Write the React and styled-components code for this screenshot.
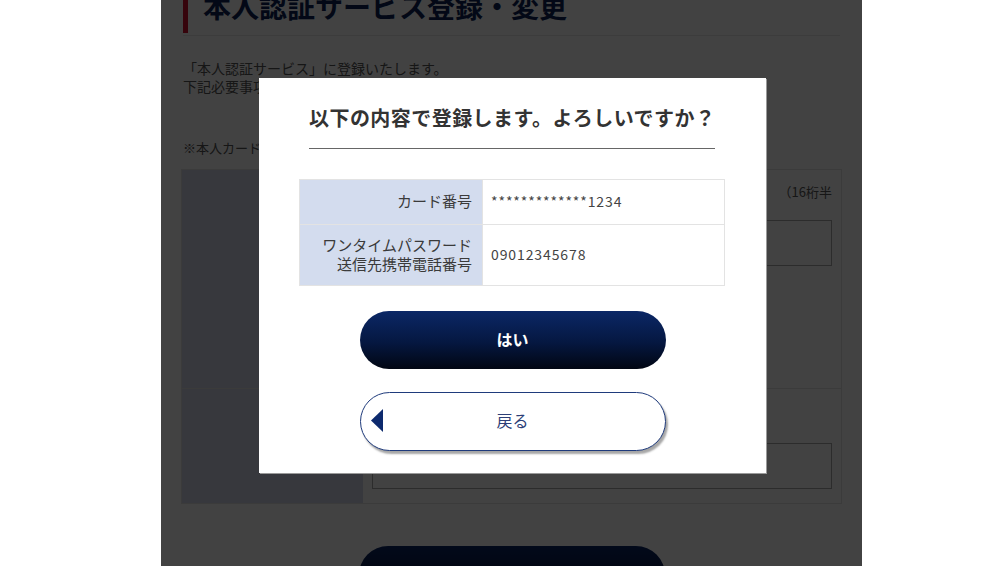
import styled, { createGlobalStyle } from 'styled-components';

const GlobalStyle = createGlobalStyle`
  html, body {
    margin: 0;
    padding: 0;
    background: #ffffff;
  }
  body {
    font-family: "Noto Sans CJK JP", "Noto Sans", sans-serif;
    color: #333;
  }
  #root {
    height: 566px;
    overflow: hidden;
  }
`

const Page = styled.div`
  position: relative;
  margin-left: 161px;
  width: 701px;
  height: 566px;
  overflow: hidden;
  background: #ffffff;
  box-sizing: border-box;
  padding: 0 20px;
`

const HeadingWrap = styled.div`
  margin: -11px 2px 0;
  padding-bottom: 2px;
  border-bottom: 1px solid #e8e8e8;
`

const Heading = styled.h1`
  margin: 0;
  padding: 0 0 10px 15px;
  border-left: 5px solid #d0102e;
  font-size: 28px;
  line-height: 34px;
  font-weight: 700;
  color: #0c1f56;
`

const Lead = styled.p`
  margin: 23px 2px 0;
  font-size: 14px;
  line-height: 18px;
  color: #555;
`

const Notice = styled.p`
  margin: 44px 2px 0;
  font-size: 13px;
  line-height: 18px;
  color: #555;
`

const FormTable = styled.div`
  margin-top: 12px;
  border: 1px solid #e4e4e4;
  display: grid;
  grid-template-columns: 181px 1fr;
`

const FormLabel = styled.div`
  height: ${p => p.$h}px;
  background: #d3d8eb;
  border-bottom: ${p => (p.$last ? 'none' : '1px solid #e4e4e4')};
  box-sizing: border-box;
`

const FormCell = styled.div`
  height: ${p => p.$h}px;
  box-sizing: border-box;
  padding: ${p => p.$pt}px 9px 0 9px;
  background: #fdfdfd;
  border-bottom: ${p => (p.$last ? 'none' : '1px solid #e4e4e4')};
`

const FieldNote = styled.div`
  font-size: 13px;
  line-height: 18px;
  color: #555;
  text-align: ${p => p.$align || 'left'};
  margin-bottom: ${p => p.$mb || 0}px;
`

const Field = styled.div`
  height: 46px;
  border: 1px solid #aaa;
  box-sizing: border-box;
  background: #fff;
`

const PillButton = styled.button`
  display: grid;
  grid-template-columns: 24px 1fr 24px;
  align-items: center;
  width: 306px;
  height: ${p => (p.$ghost ? 59 : 58)}px;
  margin: ${p => p.$mt || 0}px auto 0;
  padding: 0 10px 3px;
  box-sizing: border-box;
  border-radius: 30px;
  font-family: "Noto Sans CJK JP", sans-serif;
  font-size: 16px;
  cursor: pointer;
  border: ${p => (p.$ghost ? '1.5px solid #1f3b7c' : 'none')};
  background: ${p =>
    p.$ghost ? '#ffffff' : 'linear-gradient(to bottom, #0b2766 0%, #051740 55%, #010612 100%)'};
  color: ${p => (p.$ghost ? '#2d3f78' : '#ffffff')};
  font-weight: ${p => (p.$ghost ? 400 : 700)};
  box-shadow: ${p => (p.$ghost ? '2px 3px 2px rgba(0, 0, 0, 0.35)' : 'none')};
`

const Label = styled.span`
  grid-column: 2;
  text-align: center;
`

const Overlay = styled.div`
  position: absolute;
  inset: 0;
  background: rgba(0, 0, 0, 0.74);
`

const Modal = styled.div`
  position: absolute;
  top: 78px;
  left: 98px;
  width: 507px;
  height: 395px;
  background: #ffffff;
  box-sizing: border-box;
  padding-top: 25px;
  box-shadow: 1px 1px 0 #9a9a9a;
`

const ModalTitle = styled.h2`
  margin: 0 51px 0 50px;
  padding: 1px 0 17px;
  border-bottom: 1px solid #666;
  font-size: 20px;
  line-height: 27px;
  letter-spacing: 0.45px;
  font-weight: 700;
  color: #333;
  text-align: center;
  white-space: nowrap;
`

const ConfirmTable = styled.table`
  margin: 30px 41px 0 40px;
  width: 426px;
  border-collapse: collapse;
  table-layout: fixed;
`

const Th = styled.th`
  width: 183px;
  height: ${p => p.$h}px;
  box-sizing: border-box;
  padding: 0 10px 3px 0;
  background: #d3dcee;
  border: 1px solid #e3e3e3;
  text-align: right;
  font-size: 15px;
  line-height: 19px;
  font-weight: 400;
  color: #3a3a3a;
`

const Td = styled.td`
  box-sizing: border-box;
  padding: 0 0 3px 8px;
  border: 1px solid #e3e3e3;
  font-size: 14px;
  letter-spacing: 0.9px;
  color: #444;
`

const Arrow = () => (
  <svg width="12" height="23" viewBox="0 0 12 23">
    <polygon points="12,0 0,11.5 12,23" fill="#0d2a6e" />
  </svg>
)

export default function App() {
  return (
    <>
      <GlobalStyle />
      <Page>
        <HeadingWrap>
          <Heading>本人認証サービス登録・変更</Heading>
        </HeadingWrap>
        <Lead>
          「本人認証サービス」に登録いたします。
          <br />
          下記必要事項をご入力のうえ、「確認」ボタンを押してください。
        </Lead>
        <Notice>※本人カード会員様のみご登録いただけます。</Notice>
        <FormTable>
          <FormLabel $h={219} />
          <FormCell $h={219} $pt={13}>
            <FieldNote $align="right" $mb={19}>（16桁半</FieldNote>
            <Field />
          </FormCell>
          <FormLabel $h={114} $last />
          <FormCell $h={114} $pt={54} $last>
            <Field />
          </FormCell>
        </FormTable>
        <PillButton $mt={42} aria-label="確認" />

        <Overlay />
        <Modal>
          <ModalTitle>以下の内容で登録します。よろしいですか？</ModalTitle>
          <ConfirmTable>
            <tbody>
              <tr>
                <Th $h={45}>カード番号</Th>
                <Td>*************1234</Td>
              </tr>
              <tr>
                <Th $h={61}>
                  ワンタイムパスワード
                  <br />
                  送信先携帯電話番号
                </Th>
                <Td>09012345678</Td>
              </tr>
            </tbody>
          </ConfirmTable>
          <PillButton $mt={25}>
            <Label>はい</Label>
          </PillButton>
          <PillButton $ghost $mt={23}>
            <Arrow />
            <Label>戻る</Label>
          </PillButton>
        </Modal>
      </Page>
    </>
  )
}
